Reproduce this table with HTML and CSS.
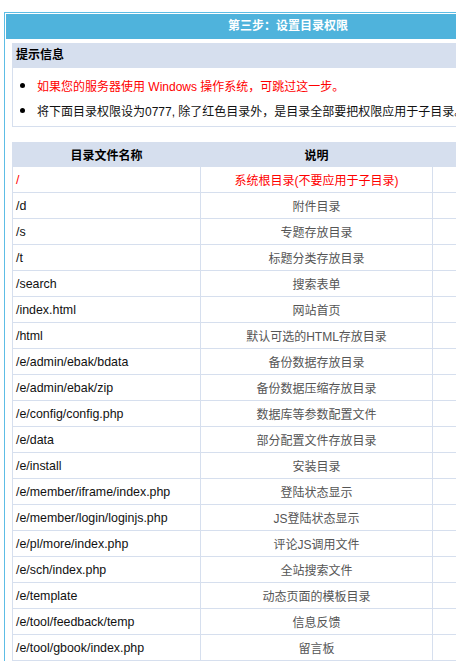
FILE: index.html
```html
<!DOCTYPE html>
<html lang="zh-CN">
<head>
<meta charset="utf-8">
<title>第三步：设置目录权限</title>
<link rel="stylesheet" href="styles.css">
</head>
<body>
<div class="panel">
  <div class="panel-title">第三步：设置目录权限</div>
  <div class="tips">
    <div class="tips-head">提示信息</div>
    <ul class="tips-list">
      <li class="red">如果您的服务器使用 Windows 操作系统，可跳过这一步。</li>
      <li>将下面目录权限设为0777, 除了红色目录外，是目录全部要把权限应用于子目录。</li>
    </ul>
  </div>
  <table class="dirs">
    <colgroup><col class="c1"><col class="c2"><col class="c3"></colgroup>
    <thead>
      <tr><th>目录文件名称</th><th>说明</th><th></th></tr>
    </thead>
    <tbody>
      <tr class="red"><td>/</td><td>系统根目录(不要应用于子目录)</td><td></td></tr>
      <tr><td>/d</td><td>附件目录</td><td></td></tr>
      <tr><td>/s</td><td>专题存放目录</td><td></td></tr>
      <tr><td>/t</td><td>标题分类存放目录</td><td></td></tr>
      <tr><td>/search</td><td>搜索表单</td><td></td></tr>
      <tr><td>/index.html</td><td>网站首页</td><td></td></tr>
      <tr><td>/html</td><td>默认可选的HTML存放目录</td><td></td></tr>
      <tr><td>/e/admin/ebak/bdata</td><td>备份数据存放目录</td><td></td></tr>
      <tr><td>/e/admin/ebak/zip</td><td>备份数据压缩存放目录</td><td></td></tr>
      <tr><td>/e/config/config.php</td><td>数据库等参数配置文件</td><td></td></tr>
      <tr><td>/e/data</td><td>部分配置文件存放目录</td><td></td></tr>
      <tr><td>/e/install</td><td>安装目录</td><td></td></tr>
      <tr><td>/e/member/iframe/index.php</td><td>登陆状态显示</td><td></td></tr>
      <tr><td>/e/member/login/loginjs.php</td><td>JS登陆状态显示</td><td></td></tr>
      <tr><td>/e/pl/more/index.php</td><td>评论JS调用文件</td><td></td></tr>
      <tr><td>/e/sch/index.php</td><td>全站搜索文件</td><td></td></tr>
      <tr><td>/e/template</td><td>动态页面的模板目录</td><td></td></tr>
      <tr><td>/e/tool/feedback/temp</td><td>信息反馈</td><td></td></tr>
      <tr><td>/e/tool/gbook/index.php</td><td>留言板</td><td></td></tr>
    </tbody>
  </table>
</div>
</body>
</html>
```
FILE: styles.css
```css
html, body {
  overflow: hidden;
}
body {
  margin: 0;
  padding: 12px 0 0 4px;
  background: #fff;
  font-family: "Liberation Sans", "Noto Sans CJK SC", sans-serif;
  font-size: 12px;
  color: #000;
}
.panel {
  width: 564px;
  border: 1px solid #5dbde5;
  padding: 1px 1px 12px 1px;
}
.panel-title {
  height: 25px;
  line-height: 25px;
  background: #4fb3dc;
  color: #fff;
  font-weight: bold;
  text-align: center;
}
.tips {
  margin: 4px 6px 0 6px;
}
.tips-head {
  height: 25px;
  line-height: 25px;
  background: #d6dfee;
  padding-left: 4px;
  font-weight: bold;
}
.tips-list {
  list-style: none;
  margin: 0;
  padding: 5px 0 3px 0;
  border: 1px solid #d6dfee;
  border-top: 0;
}
.tips-list li {
  display: flex;
  align-items: center;
  height: 25px;
  white-space: nowrap;
  color: #111;
}
.tips-list li::before {
  content: "";
  width: 5px;
  height: 5px;
  border-radius: 50%;
  background: #000;
  margin: 0 12px 0 7px;
  flex-shrink: 0;
}
.tips-list li.red {
  color: #ff0000;
}
.dirs {
  margin: 15px 6px 0 6px;
  border-collapse: separate;
  border-spacing: 0;
  table-layout: fixed;
  width: 553px;
  border-left: 1px solid #d6dfee;
}
.c1 { width: 188px; }
.c2 { width: 232px; }
.c3 { width: 133px; }
.dirs th, .dirs td {
  padding: 0;
  border-right: 1px solid #d6dfee;
  border-bottom: 1px solid #d6dfee;
  white-space: nowrap;
}
.dirs th {
  height: 24px;
  background: #d6dfee;
  font-weight: bold;
  text-align: center;
  color: #000;
}
.dirs td {
  height: 25px;
}
.dirs td:first-child {
  padding-left: 3px;
  font-size: 12.4px;
  color: #111;
}
.dirs td:nth-child(2) {
  text-align: center;
  color: #555;
}
.dirs tr.red td {
  color: #ff0000;
}
```
